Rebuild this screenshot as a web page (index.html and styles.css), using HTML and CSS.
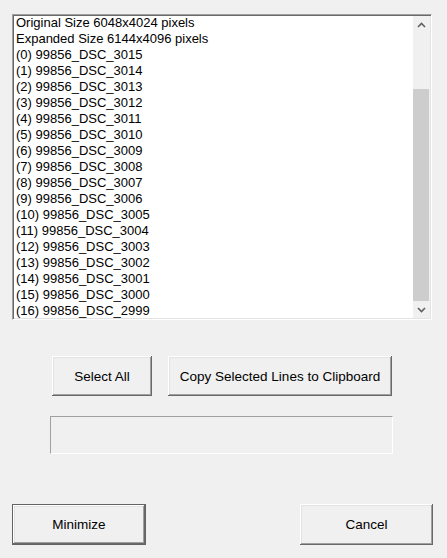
FILE: index.html
```html
<!DOCTYPE html>
<html>
<head>
<meta charset="utf-8">
<link rel="stylesheet" href="styles.css">
</head>
<body>
<div class="dialog">
  <div class="listbox">
    <ul class="lines">
      <li>Original Size 6048x4024 pixels</li>
      <li>Expanded Size 6144x4096 pixels</li>
      <li>(0) 99856_DSC_3015</li>
      <li>(1) 99856_DSC_3014</li>
      <li>(2) 99856_DSC_3013</li>
      <li>(3) 99856_DSC_3012</li>
      <li>(4) 99856_DSC_3011</li>
      <li>(5) 99856_DSC_3010</li>
      <li>(6) 99856_DSC_3009</li>
      <li>(7) 99856_DSC_3008</li>
      <li>(8) 99856_DSC_3007</li>
      <li>(9) 99856_DSC_3006</li>
      <li>(10) 99856_DSC_3005</li>
      <li>(11) 99856_DSC_3004</li>
      <li>(12) 99856_DSC_3003</li>
      <li>(13) 99856_DSC_3002</li>
      <li>(14) 99856_DSC_3001</li>
      <li>(15) 99856_DSC_3000</li>
      <li>(16) 99856_DSC_2999</li>
    </ul>
    <div class="scrollbar">
      <div class="arrow">
        <svg width="9" height="6" viewBox="0 0 9 6"><path d="M1 5 L4.5 1.5 L8 5" fill="none" stroke="#606060" stroke-width="1.6"/></svg>
      </div>
      <div class="track"><div class="thumb"></div></div>
      <div class="arrow">
        <svg width="9" height="6" viewBox="0 0 9 6"><path d="M1 1 L4.5 4.5 L8 1" fill="none" stroke="#606060" stroke-width="1.6"/></svg>
      </div>
    </div>
  </div>

  <div class="actions">
    <button class="btn btn-select">Select All</button>
    <button class="btn btn-copy">Copy Selected Lines to Clipboard</button>
  </div>

  <div class="status"></div>

  <div class="footer">
    <button class="btn btn-wide btn-default">Minimize</button>
    <button class="btn btn-wide">Cancel</button>
  </div>
</div>
</body>
</html>
```

FILE: styles.css
```css
html, body {
  margin: 0;
  padding: 0;
  background: #f0f0f0;
}

body {
  font-family: "Liberation Sans", Arial, sans-serif;
  font-size: 13px;
  color: #000;
}

.dialog {
  width: 447px;
  height: 558px;
  display: flex;
  flex-direction: column;
}

/* sunken list box with vertical scrollbar */
.listbox {
  margin: 14px 0 0 12px;
  width: 420px;
  height: 306px;
  box-sizing: border-box;
  background: #fff;
  border-top: 1px solid #a0a0a0;
  border-left: 1px solid #a0a0a0;
  border-right: 1px solid #fff;
  border-bottom: 1px solid #fff;
  box-shadow: inset 1px 1px 0 #696969, inset -1px -1px 0 #e3e3e3;
  padding: 1px;
  display: flex;
}

.lines {
  list-style: none;
  margin: -1px 0 0;
  padding: 0 0 0 2px;
  flex: 1;
  overflow: hidden;
}

.lines li {
  height: 16px;
  line-height: 16px;
  white-space: nowrap;
}

.scrollbar {
  width: 17px;
  background: #f0f0f0;
  display: flex;
  flex-direction: column;
}

.arrow {
  height: 17px;
  display: flex;
  align-items: center;
  justify-content: center;
}

.track {
  flex: 1;
  padding-top: 56px;
  display: flex;
}

.thumb {
  flex: 1;
  background: #cdcdcd;
  margin: 0 1px 0 0;
}

/* push buttons */
.btn {
  font-family: "Liberation Sans", Arial, sans-serif;
  font-size: 13.5px;
  color: #000;
  background: #f0f0f0;
  border: none;
  padding: 0;
  height: 40px;
  box-sizing: border-box;
  box-shadow: inset -1px -1px 0 #696969, inset 1px 1px 0 #fff,
              inset -2px -2px 0 #a0a0a0, inset 2px 2px 0 #e3e3e3;
}

.actions {
  display: flex;
  gap: 16px;
  margin: 36px 0 0 52px;
}

.btn-select {
  width: 100px;
}

.btn-copy {
  width: 224px;
}

/* read-only status field */
.status {
  margin: 20px 0 0 50px;
  width: 343px;
  height: 38px;
  box-sizing: border-box;
  border-top: 1px solid #a0a0a0;
  border-left: 1px solid #a0a0a0;
  border-right: 1px solid #fff;
  border-bottom: 1px solid #fff;
}

.footer {
  display: flex;
  justify-content: space-between;
  margin: 50px 14px 0 12px;
}

.btn-wide {
  width: 133px;
  height: 41px;
}

.btn-default {
  width: 134px;
  border: 1px solid #646464;
}
```
